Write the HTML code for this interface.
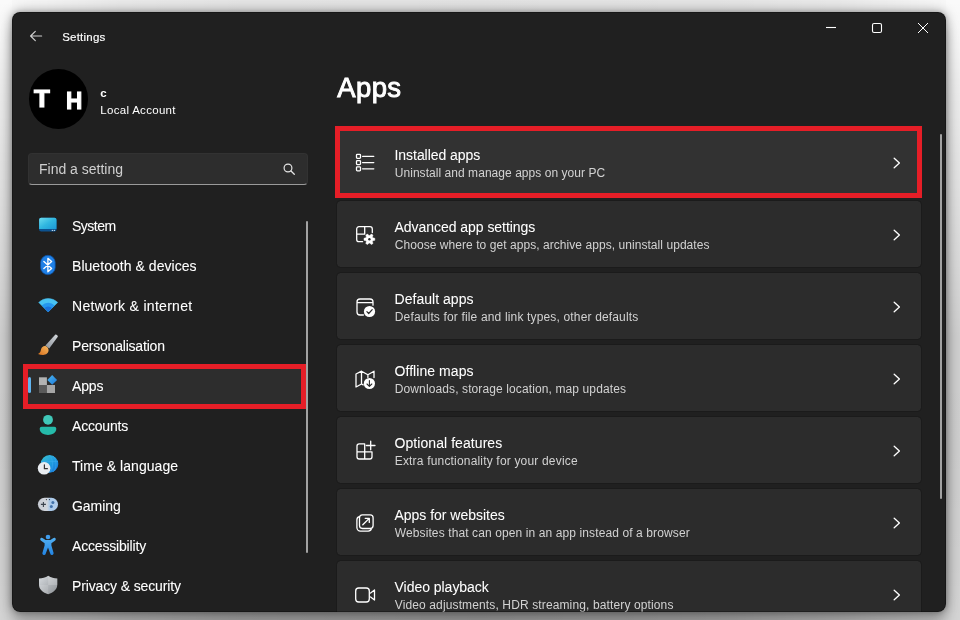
<!DOCTYPE html>
<html lang="en">
<head>
<meta charset="utf-8">
<title>Settings - Apps</title>
<style>
*{box-sizing:border-box;margin:0;padding:0}
html,body{width:960px;height:620px;overflow:hidden;font-family:"Liberation Sans",sans-serif;}
body{position:relative;background:#fff;}
#win{position:absolute;left:12px;top:12px;width:934px;height:600px;background:#202020;border-radius:8px;overflow:hidden;will-change:transform;}
#shadow{position:absolute;left:12px;top:12px;width:934px;height:600px;border-radius:8px;
box-shadow:0 0 12px rgba(0,0,0,.40),0 0 4px rgba(0,0,0,.15),0 14px 14px rgba(0,0,0,.2);}
#edge{position:absolute;left:0;top:0;right:0;bottom:0;border-radius:8px;border:1px solid rgba(0,0,0,.28);pointer-events:none}

.sd{position:absolute}
#sL{left:0;top:0;width:22px;height:620px;clip-path:polygon(0 0,12px 0,12px 12px,22px 12px,22px 612px,12px 612px,12px 100%,0 100%)}
#sR{left:936px;top:0;width:24px;height:620px;clip-path:polygon(10px 0,100% 0,100% 100%,10px 100%,10px 612px,0 612px,0 12px,10px 12px)}
#sL,#sR{background:linear-gradient(180deg,rgba(0,0,0,.02) 0,rgba(0,0,0,.04) 40px,rgba(0,0,0,.07) 80px,rgba(0,0,0,.105) 156px,rgba(0,0,0,.15) 256px,rgba(0,0,0,.193) 336px,rgba(0,0,0,.195) 450px,rgba(0,0,0,.186) 566px,rgba(0,0,0,.17) 620px)}
#sT{left:12px;top:0;width:934px;height:12px;background:linear-gradient(90deg,rgba(0,0,0,.03) 0,rgba(0,0,0,.085) 108px,rgba(0,0,0,.104) 228px,rgba(0,0,0,.115) 467px,rgba(0,0,0,.104) 706px,rgba(0,0,0,.085) 826px,rgba(0,0,0,.03) 934px)}
#sB{left:12px;top:612px;width:934px;height:8px;background:linear-gradient(90deg,rgba(0,0,0,.17) 0,rgba(0,0,0,.25) 108px,rgba(0,0,0,.31) 228px,rgba(0,0,0,.35) 467px,rgba(0,0,0,.31) 706px,rgba(0,0,0,.25) 826px,rgba(0,0,0,.17) 934px)}
.abs{position:absolute}
.t{position:absolute;white-space:nowrap;color:#fff;line-height:1;}
#ttl{left:50.2px;top:19px;font-size:11.5px;line-height:12px;letter-spacing:.22px;-webkit-text-stroke:.15px #fff}
#av{position:absolute;left:16.5px;top:57px;width:59.5px;height:59.5px;border-radius:50%;background:#000}
#av span{position:absolute;color:#fff;font-weight:bold;font-size:23.5px;line-height:24px;-webkit-text-stroke:1.1px #fff;transform-origin:0 0}
#uname{left:88.3px;top:75.5px;font-size:11.5px;font-weight:bold}
#utype{left:88.3px;top:93px;font-size:11.5px;letter-spacing:.3px}
#search{position:absolute;left:16px;top:141px;width:280px;height:32px;background:#2d2d2d;border-radius:4px;border:1px solid #323232;border-bottom:1px solid #9a9a9a}
#search .t{left:10px;top:8px;font-size:14px;color:#cfcfcf}
.nav{position:absolute;left:60px;font-size:14px;line-height:16px;color:#fff;white-space:nowrap;-webkit-text-stroke:.08px #fff}
#sel{position:absolute;left:11px;top:352px;width:283px;height:45px;border:5px solid #e61e27;background:#2d2d2d}
#acc{position:absolute;left:16px;top:365px;width:3px;height:16px;border-radius:1.5px;background:#62b4ee}
#sbar1{position:absolute;left:294px;top:209px;width:2px;height:332px;background:#a2a2a2;border-radius:1px}
#sbar2{position:absolute;left:928px;top:122px;width:2px;height:365px;background:#a2a2a2;border-radius:1px}
#h1{left:325.3px;top:61.7px;font-size:27.5px;line-height:28px;letter-spacing:.35px;-webkit-text-stroke:.9px #fff}
.card{position:absolute;left:324px;width:586px;height:68px;background:#2c2c2c;border-radius:4.5px;border:1px solid #1b1b1b;background-clip:padding-box}
.card .ti{position:absolute;left:57.5px;top:18px;font-size:14px;line-height:16px;color:#fff;white-space:nowrap;-webkit-text-stroke:.05px #fff}
.card .su{position:absolute;left:57.75px;top:37px;font-size:12px;line-height:14px;color:#d2d2d2;white-space:nowrap;}
#hl{position:absolute;left:323px;top:114px;width:587px;height:72px;border:5px solid #e61e27;background:#323232}
/*LS*/
#n0{letter-spacing:-0.500px}
#n1{letter-spacing:0.044px}
#n2{letter-spacing:0.294px}
#n3{letter-spacing:-0.200px}
#n4{letter-spacing:-0.167px}
#n5{letter-spacing:-0.200px}
#n6{letter-spacing:0.050px}
#n7{letter-spacing:-0.060px}
#n8{letter-spacing:-0.175px}
#n9{letter-spacing:-0.129px}
#t0{letter-spacing:-0.046px}
#s0{letter-spacing:0.047px}
#t1{letter-spacing:-0.040px}
#s1{letter-spacing:0.057px}
#t2{letter-spacing:0.036px}
#s2{letter-spacing:0.157px}
#t3{letter-spacing:0.059px}
#s3{letter-spacing:0.113px}
#t4{letter-spacing:0.069px}
#s4{letter-spacing:0.179px}
#t5{letter-spacing:-0.019px}
#s5{letter-spacing:0.108px}
#t6{letter-spacing:-0.027px}
#s6{letter-spacing:0.127px}
/*END*/
#ov{position:absolute;left:0;top:0;width:960px;height:620px;pointer-events:none}
</style>
</head>
<body>
<div class="sd" id="sL"></div><div class="sd" id="sR"></div><div class="sd" id="sT"></div><div class="sd" id="sB"></div>
<div id="shadow"></div>
<div id="win">
  <div class="t" id="ttl">Settings</div>

  <div id="av"><span style="left:5px;top:18.3px;transform:scaleX(1.1)">T</span><span style="left:37.3px;top:20.3px;transform:scaleX(.96)">H</span></div>
  <div class="t" id="uname">c</div>
  <div class="t" id="utype">Local Account</div>

  <div id="search"><div class="t">Find a setting</div></div>

  <div id="sel"></div><div id="acc"></div>
  <div id="sbar1"></div>

  <div class="nav" id="n0" style="top:206px">System</div>
  <div class="nav" id="n1" style="top:246px">Bluetooth &amp; devices</div>
  <div class="nav" id="n2" style="top:286px">Network &amp; internet</div>
  <div class="nav" id="n3" style="top:326px">Personalisation</div>
  <div class="nav" id="n4" style="top:366px">Apps</div>
  <div class="nav" id="n5" style="top:406px">Accounts</div>
  <div class="nav" id="n6" style="top:446px">Time &amp; language</div>
  <div class="nav" id="n7" style="top:486px">Gaming</div>
  <div class="nav" id="n8" style="top:526px">Accessibility</div>
  <div class="nav" id="n9" style="top:566px">Privacy &amp; security</div>

  <div class="t" id="h1">Apps</div>

  <div id="hl"></div>
  <div class="card" style="top:116px;background:none;border-color:transparent"><div class="ti" id="t0">Installed apps</div><div class="su" id="s0">Uninstall and manage apps on your PC</div></div>
  <div class="card" style="top:188px"><div class="ti" id="t1">Advanced app settings</div><div class="su" id="s1">Choose where to get apps, archive apps, uninstall updates</div></div>
  <div class="card" style="top:260px"><div class="ti" id="t2">Default apps</div><div class="su" id="s2">Defaults for file and link types, other defaults</div></div>
  <div class="card" style="top:332px"><div class="ti" id="t3">Offline maps</div><div class="su" id="s3">Downloads, storage location, map updates</div></div>
  <div class="card" style="top:404px"><div class="ti" id="t4">Optional features</div><div class="su" id="s4">Extra functionality for your device</div></div>
  <div class="card" style="top:476px"><div class="ti" id="t5">Apps for websites</div><div class="su" id="s5">Websites that can open in an app instead of a browser</div></div>
  <div class="card" style="top:548px"><div class="ti" id="t6">Video playback</div><div class="su" id="s6">Video adjustments, HDR streaming, battery options</div></div>
  <div id="sbar2"></div>

  <!-- ICONS: page coordinates (svg shifted -12,-12 inside window) -->
  <svg id="ov" style="left:-12px;top:-12px" viewBox="0 0 960 620">
  <defs>
    <linearGradient id="gSys" x1="0" y1="0" x2="1" y2="1"><stop offset="0" stop-color="#6cdcee"/><stop offset=".5" stop-color="#30b6e0"/><stop offset="1" stop-color="#1c98d6"/></linearGradient>
    <linearGradient id="gApp" x1="0" y1="0" x2="1" y2="1"><stop offset="0" stop-color="#4cb8f2"/><stop offset="1" stop-color="#1c78d8"/></linearGradient>
    <linearGradient id="gBr" x1="1" y1="0" x2="0" y2="1"><stop offset="0" stop-color="#d4d8dc"/><stop offset="1" stop-color="#8a9098"/></linearGradient>
    <linearGradient id="gTip" x1="1" y1="0" x2="0" y2="1"><stop offset="0" stop-color="#f8b860"/><stop offset="1" stop-color="#d8701c"/></linearGradient>
    <linearGradient id="gGl" x1="0" y1="0" x2="1" y2="1"><stop offset="0" stop-color="#3cc4d0"/><stop offset=".55" stop-color="#1e9ade"/><stop offset="1" stop-color="#1670dc"/></linearGradient>
    <linearGradient id="gGm" x1="0" y1="0" x2="1" y2="0"><stop offset="0" stop-color="#c6cad2"/><stop offset=".45" stop-color="#d2d6dc"/><stop offset=".6" stop-color="#a9c9ea"/><stop offset="1" stop-color="#b4cfec"/></linearGradient>
    <linearGradient id="gAc" x1="0" y1="0" x2="0" y2="1"><stop offset="0" stop-color="#52b0f2"/><stop offset="1" stop-color="#2384e2"/></linearGradient>
    <linearGradient id="gSh" x1="0" y1="0" x2="1" y2="1"><stop offset="0" stop-color="#d8dce0"/><stop offset="1" stop-color="#8c9094"/></linearGradient>
  </defs>

  <!-- back arrow -->
  <path d="M35.3 31.3 L30.6 36 L35.3 40.7 M30.6 36 H41.6" fill="none" stroke="#cfcfcf" stroke-width="1.2" stroke-linecap="round" stroke-linejoin="round"/>
  <!-- window controls -->
  <path d="M826 27.5 H836" stroke="#fff" stroke-width="1.1" fill="none"/>
  <rect x="872.5" y="23.5" width="9" height="9" rx="1.6" fill="none" stroke="#fff" stroke-width="1.1"/>
  <path d="M918 23 L928 33 M928 23 L918 33" stroke="#fff" stroke-width="1" fill="none"/>
  <!-- search icon -->
  <circle cx="288" cy="168" r="3.9" fill="none" stroke="#e4e4e4" stroke-width="1.2"/><path d="M291 171 L294.3 174.3" stroke="#e4e4e4" stroke-width="1.3" stroke-linecap="round"/>

  <!-- System -->
  <rect x="39.1" y="217.8" width="17.4" height="13.7" rx="2" fill="#0c5290"/>
  <path d="M39.1 229 V219.8 A2 2 0 0 1 41.1 217.8 H54.5 A2 2 0 0 1 56.5 219.8 V229 Z" fill="url(#gSys)"/>
  <rect x="51.8" y="229.9" width="1" height="1" fill="#fff"/><rect x="53.8" y="229.9" width="1" height="1" fill="#fff"/>
  <!-- Bluetooth -->
  <rect x="40.6" y="255.3" width="14.6" height="19.4" rx="7.3" fill="#1f80e6" stroke="#0d4f9e" stroke-width=".8"/>
  <path d="M43.9 261.4 L51.6 268.4 L47.9 271.7 V258.3 L51.6 261.6 L43.9 268.6" fill="none" stroke="#fff" stroke-width="1.35" stroke-linejoin="round" stroke-linecap="round"/>
  <!-- Network -->
  <path d="M48.2 311.9 L38.7 302.4 A13.4 13.4 0 0 1 57.7 302.4 Z" fill="#48c2f2" stroke="#48c2f2" stroke-width=".5" stroke-linejoin="round"/>
  <path d="M48.2 311.9 L41.7 305.4 A9.2 9.2 0 0 1 54.7 305.4 Z" fill="#2596ee"/>
  <path d="M48.2 311.9 L44.4 308.1 A5.4 5.4 0 0 1 52 308.1 Z" fill="#1a72dc"/>
  <!-- Personalisation -->
  <path d="M55.4 334.6 C56.6 334.4 58 335.6 57.8 336.8 L49.2 348.6 L45.4 345.6 Z" fill="url(#gBr)"/>
  <path d="M46.2 346.4 C48.8 347.6 49.6 351.2 47 353.6 C44.4 355.8 40.8 354.8 38 354 C40.4 353 40.6 351.2 41 349.6 C41.6 347 44 345.4 46.2 346.4 Z" fill="url(#gTip)"/>
  <!-- Apps -->
  <rect x="39" y="377.3" width="7.9" height="7.7" fill="#b2b2b2"/>
  <rect x="39" y="385" width="7.9" height="8" fill="#5a5a5a"/>
  <rect x="46.9" y="385" width="8.1" height="8" fill="#a6a6a6"/>
  <path d="M52.2 375 L57.1 379.9 L52.2 384.8 L47.3 379.9 Z" fill="url(#gApp)"/>
  <!-- Accounts -->
  <circle cx="48" cy="419.8" r="4.9" fill="#40c8b9"/>
  <path d="M41.7 426.8 H54.3 A2 2 0 0 1 56.3 428.8 C56.3 433 52 434.9 48 434.9 C44 434.9 39.7 433 39.7 428.8 A2 2 0 0 1 41.7 426.8Z" fill="#25baa9"/>
  <!-- Time & language -->
  <circle cx="49.5" cy="463.9" r="8.8" fill="url(#gGl)"/>
  <path d="M49.5 455.1 C53.5 458 53.5 470 49.5 472.7 M41 461.5 H58 M53 456 C57 459 57 469 53 472" fill="none" stroke="#39a8ee" stroke-width=".8" opacity=".7"/>
  <circle cx="44.1" cy="468.3" r="6.3" fill="#e9edf1"/>
  <path d="M44.4 464.8 V468.7 H47.4" fill="none" stroke="#333" stroke-width="1.2" stroke-linecap="round" stroke-linejoin="round"/>
  <!-- Gaming -->
  <rect x="37.9" y="497.7" width="20.1" height="13.2" rx="6.6" fill="url(#gGm)"/>
  <path d="M43.4 501.9 V506.9 M40.9 504.4 H45.9" stroke="#3a424c" stroke-width="1.1" fill="none"/>
  <circle cx="46.4" cy="499.6" r=".6" fill="#303840"/><circle cx="49.5" cy="499.6" r=".6" fill="#303840"/>
  <circle cx="52.9" cy="502.4" r="1.5" fill="#4272aa"/><circle cx="51.3" cy="506.5" r="1.5" fill="#4272aa"/>
  <!-- Accessibility -->
  <circle cx="48" cy="537" r="2.3" fill="#3f9cec"/>
  <path d="M40.6 538.2 C41.4 537.5 42.3 537.8 42.9 538.3 L45.6 540 H50.4 L53.1 538.3 C53.7 537.8 54.6 537.5 55.4 538.2 C56 539 55.8 539.9 55.2 540.4 L51.4 543.3 V545.6 L53.6 553 C53.6 554 53.1 554.8 52.3 555 C51.5 555.2 50.7 554.7 50.4 553.9 L48 547.6 L45.6 553.9 C45.3 554.7 44.5 555.2 43.7 555 C42.9 554.8 42.2 554 42.4 553 L44.6 545.6 V543.3 L40.8 540.4 C40.2 539.9 40 539 40.6 538.2Z" fill="url(#gAc)"/>
  <!-- Privacy -->
  <path d="M48.2 575.7 C51 577.6 54 578.4 57.3 578.4 V584.5 C57.3 589.5 53.5 592.5 48.2 594.2 C42.8 592.5 39 589.5 39 584.5 V578.4 C42.4 578.4 45.4 577.6 48.2 575.7Z" fill="url(#gSh)"/>
  <path d="M48.2 575.7 C51 577.6 54 578.4 57.3 578.4 V585 H48.2 Z" fill="#fff" opacity=".18"/>
  <path d="M48.2 585 H39 C39.2 589.6 42.9 592.5 48.2 594.2 Z" fill="#fff" opacity=".12"/>

  <!-- card icons -->
  <g fill="none" stroke="#fff" stroke-width="1.3" stroke-linecap="round" stroke-linejoin="round">
    <!-- installed apps -->
    <rect x="356.5" y="154.3" width="4" height="4" rx=".8"/><rect x="356.5" y="160.6" width="4" height="4" rx=".8"/><rect x="356.5" y="166.8" width="4" height="4" rx=".8"/>
    <path d="M362.6 156.3 H373.8 M362.6 162.6 H373.8 M362.6 168.8 H373.8"/>
    <!-- advanced app settings -->
    <path d="M372.3 232.6 V229 A2.3 2.3 0 0 0 370 226.7 H359 A2.3 2.3 0 0 0 356.7 229 V239.4 A2.3 2.3 0 0 0 359 241.7 H362.6 M364.7 226.7 V234.2 M356.7 234.2 H364.7"/>
    <!-- default apps -->
    <path d="M363.4 315 H360 A3 3 0 0 1 357 312 V302 A3 3 0 0 1 360 299 H370 A3 3 0 0 1 373 302 V305.2 M357 302.7 H373"/>
    <!-- offline maps -->
    <path d="M363.2 384.9 L361.5 384 L356 387 V374 L361.5 371.2 L367.9 374.8 L374 371.2 V377.6 M361.5 371.2 V384 M367.9 374.8 V377.4"/>
    <!-- optional features -->
    <path d="M364.7 443.9 H359.2 A2.2 2.2 0 0 0 357 446.1 V456.8 A2.2 2.2 0 0 0 359.2 459 H369.8 A2.2 2.2 0 0 0 372 456.8 V451.8 H357 M364.7 443.9 V459 M370.7 441.2 V449.8 M366.4 445.5 H375"/>
    <!-- apps for websites -->
    <rect x="359.5" y="514.9" width="13.6" height="13.6" rx="2.9"/>
    <path d="M359.3 516.6 C357.8 517 356.9 518.3 356.9 519.8 V527.6 A3.5 3.5 0 0 0 360.4 531.1 H368.2 C369.7 531.1 371 530.2 371.4 528.8 M362.8 524.8 L369.2 518.4 M365.2 518.3 H369.3 V522.4"/>
    <!-- video playback -->
    <rect x="355.7" y="588" width="13.6" height="14" rx="3"/>
    <path d="M370.6 593 L374.5 590 V600 L370.6 597 "/>
    <!-- chevrons -->
    <path d="M894.2 158.2 L899.4 163 L894.2 167.8 M894.2 230.2 L899.4 235 L894.2 239.8 M894.2 302.2 L899.4 307 L894.2 311.8 M894.2 374.2 L899.4 379 L894.2 383.8 M894.2 446.2 L899.4 451 L894.2 455.8 M894.2 518.2 L899.4 523 L894.2 527.8 M894.2 590.2 L899.4 595 L894.2 599.8"/>
  </g>
  <!-- gear -->
  <path d="M372.8 237.8 L374.8 238.3 L374.8 240.3 L372.8 240.8 L372.4 241.5 L373.0 243.5 L371.2 244.5 L369.8 243.0 L369.0 243.0 L367.6 244.5 L365.8 243.5 L366.4 241.5 L366.0 240.8 L364.0 240.3 L364.0 238.3 L366.0 237.8 L366.4 237.1 L365.8 235.1 L367.6 234.1 L369.0 235.6 L369.8 235.6 L371.2 234.1 L373.0 235.1 L372.4 237.1 Z" fill="#fff" stroke="#fff" stroke-width=".5" stroke-linejoin="round"/>
  <circle cx="369.4" cy="239.3" r="1.2" fill="#2b2b2b"/>
  <!-- default apps check -->
  <circle cx="369.5" cy="311.5" r="5.6" fill="#fff"/>
  <path d="M366.9 311.7 L368.7 313.5 L372.2 309.7" fill="none" stroke="#2b2b2b" stroke-width="1.2" stroke-linecap="round" stroke-linejoin="round"/>
  <!-- map download -->
  <circle cx="369.4" cy="383.5" r="5.6" fill="#fff"/>
  <path d="M369.4 380.5 V386.2 M367 384 L369.4 386.4 L371.8 384" fill="none" stroke="#2b2b2b" stroke-width="1.1" stroke-linecap="round" stroke-linejoin="round"/>
  </svg>
  <div id="edge"></div>
</div>
</body>
</html>
